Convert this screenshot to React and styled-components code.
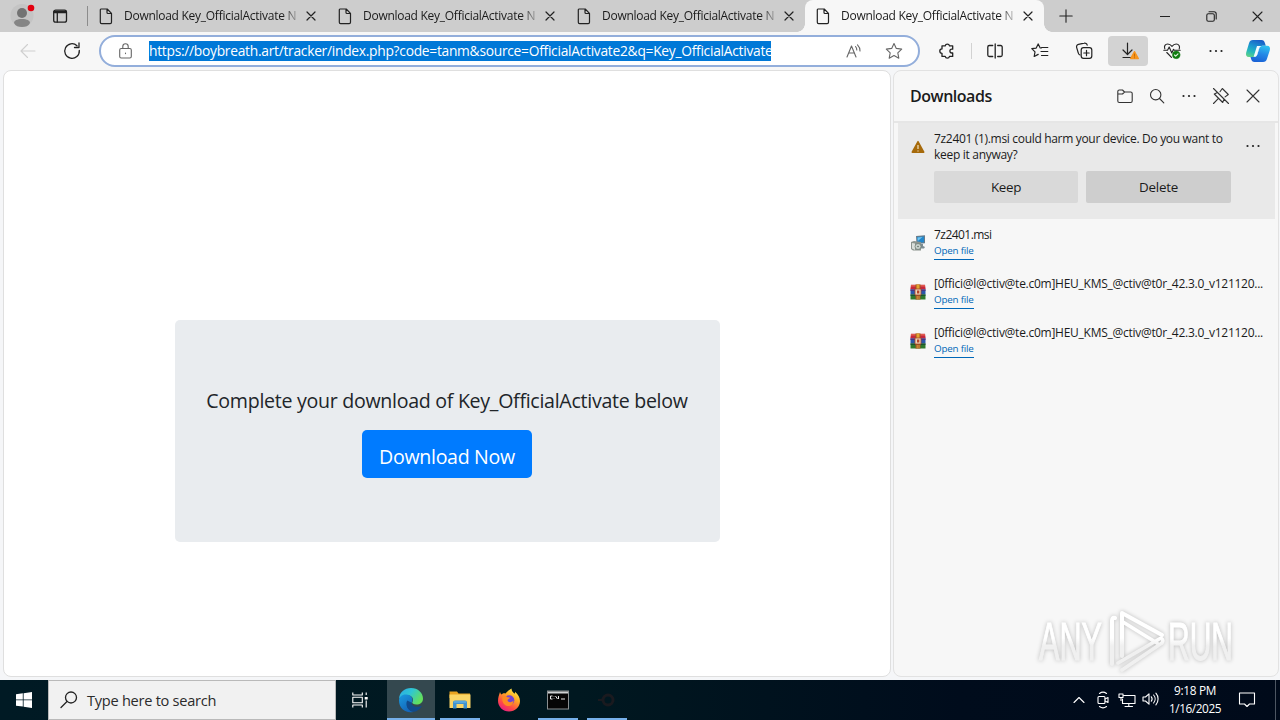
import React from 'react';
import styled, { createGlobalStyle } from 'styled-components';

const GlobalStyle = createGlobalStyle`
  body {
    margin: 0;
    overflow: hidden;
    font-family: 'Open Sans', 'Noto Sans', sans-serif;
    color: #1b1b1b;
  }

  * {
    box-sizing: border-box;
  }

  svg {
    display: block;
    flex-shrink: 0;
  }
`;

const Desktop = styled.div`
  width: 1280px;
  height: 720px;
  display: flex;
  flex-direction: column;
  position: relative;
  overflow: hidden;
  background: #f5f6f8;
`;

/* Text whose tracking is tuned per use */
const Label = styled.span`
  font-size: ${(p) => p.$size || 12}px;
  letter-spacing: ${(p) => p.$track || 0}px;
  white-space: nowrap;
`;

const Cell = styled.div`
  width: ${(p) => p.$w || 32}px;
  height: 100%;
  margin-left: ${(p) => p.$gap || 0}px;
  flex-shrink: 0;
  display: flex;
  align-items: center;
  justify-content: center;
`;

/* ---------- Tab strip ---------- */

const TabStrip = styled.div`
  height: 32px;
  flex-shrink: 0;
  display: flex;
  background: #cdcdcd;
`;

const StripDivider = styled.div`
  width: 1px;
  height: 20px;
  margin: 6px 0 0 11px;
  background: #8c8c8c;
`;

const Tab = styled.div`
  width: 239px;
  height: 32px;
  display: flex;
  align-items: center;
  padding-left: 11px;
  position: relative;
  border-radius: 8px 8px 0 0;
  background: ${(p) => (p.$active ? '#f7f7f7' : 'transparent')};

  &::before,
  &::after {
    content: '';
    display: ${(p) => (p.$active ? 'block' : 'none')};
    position: absolute;
    bottom: 0;
    width: 8px;
    height: 8px;
  }

  &::before {
    left: -8px;
    background: radial-gradient(circle at 0 0, transparent 7.5px, #f7f7f7 8px);
  }

  &::after {
    right: -8px;
    background: radial-gradient(circle at 100% 0, transparent 7.5px, #f7f7f7 8px);
  }
`;

const TabTitle = styled.div`
  width: 173px;
  margin-left: 11px;
  padding-bottom: 2px;
  overflow: hidden;
  line-height: 18px;
  mask-image: linear-gradient(to right, #000 158px, transparent 178px);
`;

const TabClose = styled.div`
  width: 28px;
  display: flex;
  justify-content: center;
`;

const WindowButtons = styled.div`
  display: flex;
  margin-left: auto;
`;

/* ---------- Toolbar ---------- */

const Toolbar = styled.div`
  height: 38px;
  flex-shrink: 0;
  display: flex;
  align-items: center;
  padding-left: 6px;
  background: #f7f7f7;
`;

const AddressBar = styled.div`
  width: 821px;
  height: 32px;
  flex-shrink: 0;
  margin-left: 5px;
  display: flex;
  align-items: center;
  border: 2px solid #93aedb;
  border-radius: 16px;
  background: #fff;
`;

const SelectedUrl = styled.div`
  height: 20px;
  flex-shrink: 0;
  line-height: 19px;
  width: 622px;
  background: #0078d7;
  color: #fff;
`;

const ToolSeparator = styled.div`
  width: 1px;
  height: 16px;
  margin: 0 2px 0 -2px;
  background: #d2d2d2;
`;

const ActiveTool = styled.div`
  width: 40px;
  height: 30px;
  margin-left: 3px;
  flex-shrink: 0;
  display: flex;
  align-items: center;
  justify-content: center;
  border-radius: 4px;
  background: #d3d3d3;
`;

/* ---------- Page ---------- */

const Main = styled.div`
  height: 610px;
  flex-shrink: 0;
  display: flex;
  gap: 2px;
  padding: 0 0 3px 3px;
`;

const Page = styled.div`
  width: 888px;
  height: 607px;
  display: flex;
  justify-content: center;
  padding-top: 249px;
  border: 1px solid #dfdfdf;
  border-radius: 8px;
  background: #fff;
`;

const Jumbotron = styled.div`
  width: 545px;
  height: 222px;
  display: flex;
  flex-direction: column;
  align-items: center;
  padding-top: 66px;
  border-radius: 5px;
  background: #e9ecef;
  color: #212529;
`;

const Lead = styled.p`
  margin: 0 0 14px;
  height: 30px;
  line-height: 30px;
`;

const DownloadButton = styled.button`
  width: 170px;
  height: 48px;
  padding: 4px 0 0;
  border: 0;
  border-radius: 5px;
  background: #007bff;
  color: #fff;
  font-family: inherit;
`;

/* ---------- Downloads panel ---------- */

const Panel = styled.aside`
  width: 386px;
  height: 607px;
  display: flex;
  flex-direction: column;
  border: 1px solid #e2e2e2;
  border-radius: 8px;
  background: #f7f7f7;
`;

const PanelHeader = styled.div`
  height: 52px;
  display: flex;
  align-items: center;
  padding: 0 9px 0 16px;
  border-bottom: 2px solid #e6e6e6;
`;

const PanelTitle = styled.h1`
  margin: 0 auto 0 0;
  font-size: 16px;
  font-weight: 600;
  letter-spacing: -0.47px;
`;

const Warning = styled.div`
  width: 377px;
  height: 96px;
  margin-left: 4px;
  padding: 8px 6px 0 12px;
  display: flex;
  background: #e9e9e9;
`;

const WarningBody = styled.div`
  width: 297px;
  margin: 0 14px 0 8px;
`;

const WarningText = styled.div`
  display: flex;
  flex-direction: column;
  line-height: 16px;
  height: 40px;
`;

const ButtonRow = styled.div`
  display: flex;
  gap: 8px;
`;

const PanelButton = styled.button`
  width: ${(p) => p.$w}px;
  height: 32px;
  padding: 0;
  border: 0;
  border-radius: 2px;
  background: ${(p) => p.$bg};
  color: #1b1b1b;
  font-family: inherit;
`;

const FileRow = styled.div`
  height: 49px;
  display: flex;
  padding: 8px 0 0 16px;
`;

const FileIcon = styled.div`
  width: 16px;
  padding-top: ${(p) => p.$drop || 8}px;
`;

const FileInfo = styled.div`
  display: flex;
  flex-direction: column;
  align-items: flex-start;
  margin-left: 8px;
  line-height: 16px;
`;

const OpenLink = styled.a`
  width: 40px;
  height: 15px;
  margin-top: 2px;
  line-height: 12px;
  border-bottom: 1px solid #0067b8;
  color: #0067b8;
  display: flex;
`;

/* ---------- Watermark ---------- */

const Watermark = styled.svg`
  position: absolute;
  left: 1030px;
  top: 602px;
  filter: drop-shadow(0 0 2px rgba(0, 0, 0, 0.24));
`;

/* ---------- Taskbar ---------- */

const Taskbar = styled.div`
  height: 40px;
  flex-shrink: 0;
  display: flex;
  background: linear-gradient(to right, #001a24 0, #001820 45%, #000c1c 75%, #000a1a 100%);
  color: #fff;
`;

const SearchBox = styled.div`
  width: 288px;
  height: 40px;
  display: flex;
  align-items: center;
  padding-left: 11px;
  gap: 9px;
  border: 1px solid #b9b9b9;
  background: #f1f1f1;
  color: #2b2b2b;
`;

const AppButton = styled.div`
  width: ${(p) => p.$w || 40}px;
  height: 40px;
  margin-left: ${(p) => p.$gap || 0}px;
  display: flex;
  align-items: center;
  justify-content: center;
  padding-top: 2px;
  border-bottom: 2px solid ${(p) => (p.$running ? '#76b0ea' : 'transparent')};
  background: ${(p) => (p.$active ? '#34484f' : 'transparent')};
  background-clip: padding-box;
`;

const Tray = styled.div`
  display: flex;
  margin-left: auto;
`;

const Clock = styled.div`
  width: 64px;
  display: flex;
  flex-direction: column;
  align-items: center;
  padding-top: 1px;
  line-height: 18px;
`;

const ShowDesktop = styled.div`
  width: 5px;
  height: 40px;
  margin-left: 8px;
  border-left: 1px solid #4d5662;
`;

/* ---------- Icons ---------- */

const Svg = ({ w = 16, h = w, sw = 1.1, color = '#222', children }) => (
  <svg
    width={w}
    height={h}
    viewBox={`0 0 ${w} ${h}`}
    fill="none"
    stroke={color}
    strokeWidth={sw}
    strokeLinecap="round"
    strokeLinejoin="round"
  >
    {children}
  </svg>
);

const ProfileIcon = () => (
  <svg width="26" height="28" viewBox="0 0 26 28">
    <circle cx="13" cy="13.5" r="11.5" fill="#c4c4c4" />
    <circle cx="13" cy="11" r="5" fill="#737373" />
    <path d="M5 21c0-2.400 3-4 8-4s8 1.600 8 4c-1.500 3-4.500 4-8 4s-6.500-1-8-4z" fill="#858585" />
    <circle cx="22" cy="6" r="3.300" fill="#e3000f" />
  </svg>
);

const TabActionsIcon = () => (
  <Svg sw={1.3}>
    <rect x="1.700" y="2.200" width="12.800" height="12" rx="2" />
    <path d="M2.500 4h11.200" strokeWidth="2.600" />
    <path d="M5.300 5v9" />
  </Svg>
);

const PageIcon = () => (
  <Svg w={14} h={17} sw={1.2}>
    <path d="M2 1h6.200L12.500 5.400V14.300a1.300 1.300 0 0 1-1.300 1.300H2.600A1.300 1.300 0 0 1 1.300 14.300V1.800A.8.8 0 0 1 2 1zM8 1.300v3.200a1 1 0 0 0 1 1h3.300" />
  </Svg>
);

const CrossIcon = ({ size = 10, sw = 1.2, color }) => (
  <Svg w={size} sw={sw} color={color}>
    <path d={`M1 1L${size - 1} ${size - 1}M${size - 1} 1L1 ${size - 1}`} />
  </Svg>
);

const DotsIcon = () => (
  <svg width="16" height="16" viewBox="0 0 16 16" fill="#222">
    <circle cx="2.500" cy="8" r="1.100" />
    <circle cx="8" cy="8" r="1.100" />
    <circle cx="13.500" cy="8" r="1.100" />
  </svg>
);

const DownloadToolIcon = () => (
  <Svg w={24} h={20} sw={1.2}>
    <path d="M11.500 2v11M7 9l4.500 4.500L16 9M7 16.500h8" />
    <path d="M18.500 10.600l3.900 7h-7.800z" fill="#f7941d" stroke="#f7941d" />
    <path d="M18.500 13v2.300M18.500 16.700v.2" stroke="#c06a00" strokeWidth=".9" />
  </Svg>
);

const HeartIcon = () => (
  <Svg w={18} sw={1.1}>
    <path d="M1.800 6.800C.8 4 2.200 2 4.700 2 6.500 2 8 3 9 4.300 10 3 11.500 2 13.200 2c2.600 0 4 2.300 3 5M3.800 10.500l4.700 4.800" />
    <path d="M.8 8.300h3.700L6.200 5l2.600 6 1.700-3.700 1 1h5.700" />
    <circle cx="13.200" cy="12.900" r="3.800" fill="#107c10" stroke="#107c10" strokeWidth=".4" />
    <path d="M11.500 13l1.200 1.200 2.300-2.400" stroke="#e4f3e4" />
  </Svg>
);

const CopilotIcon = () => (
  <svg width="26" height="24" viewBox="0 0 26 24">
    <defs>
      <linearGradient id="copilotLeft" x1=".6" y1="0" x2=".2" y2="1">
        <stop offset="0" stopColor="#1a5fc8" />
        <stop offset=".4" stopColor="#1b97d0" />
        <stop offset=".7" stopColor="#25b9bb" />
        <stop offset="1" stopColor="#5fd088" />
      </linearGradient>
      <linearGradient id="copilotRight" x1=".7" y1="0" x2=".4" y2="1">
        <stop offset="0" stopColor="#2fc0f0" />
        <stop offset=".5" stopColor="#2488e6" />
        <stop offset="1" stopColor="#1a62d6" />
      </linearGradient>
    </defs>
    <path d="M8 1h8.500c2 0 2.800 1.200 3.400 3l.9 2.800h-3.300c-2 0-3 1-3.600 3l-1.700 5.400c-.6 1.900-1.500 2.800-3.400 2.800H4c-2.600 0-3.500-2-2.800-4.500L4 4.200C4.700 2.100 5.800 1 8 1z" fill="url(#copilotLeft)" />
    <path d="M18 23H9.500c-2 0-2.800-1.200-3.400-3l-.6-2H9c2 0 2.800-1 3.400-2.800l1.700-5.400c.6-2 1.600-3 3.600-3H22c2.600 0 3.500 2 2.800 4.500L22 19.800c-.7 2.100-1.800 3.200-4 3.200z" fill="url(#copilotRight)" />
    <path d="M12 7h4.500c-1.400.5-2 1.300-2.500 2.800l-1.700 5.400c-.4 1.300-.9 2-1.900 2.500H8.600z" fill="#f2fbff" />
  </svg>
);

const PinOffIcon = () => (
  <Svg w={18} sw={1.1} color="#333">
    <path d="M1.500 1.500l15 15M8 4.700l2.300-3.200 6 6-3.200 2.400M5.500 5.600L2.300 7l8.400 8.500 1.300-3.200M6 11.800L1.500 16.500" />
  </Svg>
);

const WarningIcon = () => (
  <svg width="16" height="16" viewBox="0 0 16 16">
    <path d="M7.400 2.200a.7.700 0 0 1 1.200 0l5.800 10.600a.8.800 0 0 1-.7 1.200H2.300a.8.800 0 0 1-.7-1.200z" fill="#a66a0b" />
    <path d="M8 6v4M8 11.500v1" stroke="#f4e4c6" strokeWidth="1.200" />
  </svg>
);

const InstallerIcon = () => (
  <svg width="16" height="16" viewBox="0 0 16 16">
    <path d="M6 1l9-.8v8L6.500 9z" fill="#687b89" />
    <path d="M7 2l7-.6v5.800l-6.500.6z" fill="#2387cc" />
    <path d="M7.500 2.400l5-.4-4.700 4z" fill="#72c5ef" />
    <path d="M9 9h4v2l2 1-1 1.500H9z" fill="#7d8c92" />
    <path d="M1 7l3-1 7 1v8.500H3L1 14z" fill="#8b948e" />
    <path d="M2 8l3 .5V15L2 13.500z" fill="#dadfda" />
    <circle cx="8" cy="11.500" r="3" fill="#c8d2cd" stroke="#68756e" strokeWidth=".7" />
    <circle cx="8" cy="11.500" r=".8" fill="#5b6b62" />
  </svg>
);

const ArchiveIcon = () => (
  <svg width="16" height="16" viewBox="0 0 16 16">
    <path d="M1 .8h14l.7 4.700H.3z" fill="#c5283d" />
    <path d="M1 1h14v1.600H1z" fill="#e25a4d" />
    <path d="M.5 5.500h15v5H.5z" fill="#2a56a8" />
    <path d="M.5 5.500h15v1.500H.5z" fill="#4b3583" />
    <path d="M.5 10.500h15v5H.5z" fill="#2e7a2c" />
    <path d="M.5 10.500h15v1.300H.5z" fill="#174d34" />
    <path d="M5.500.5h5v15h-5z" fill="#9b5520" />
    <path d="M6.500.5h3v5h-3z" fill="#e3a42e" />
    <path d="M5 5h6v6H5z" fill="#e9d6b8" stroke="#a9412c" strokeWidth=".8" />
    <path d="M7 6.500h2.300v3H7z" fill="#b84326" />
    <path d="M7.200 12v3.500M9 12v3.500" stroke="#dc9a3f" />
  </svg>
);

const EdgeIcon = () => (
  <svg width="26" height="26" viewBox="0 0 26 26">
    <defs>
      <linearGradient id="edgeTop" x1="0" y1="0" x2="1" y2=".5">
        <stop offset="0" stopColor="#2ba9e6" />
        <stop offset=".5" stopColor="#2fc6d4" />
        <stop offset="1" stopColor="#63df5c" />
      </linearGradient>
      <linearGradient id="edgeBody" x1="0" y1="0" x2=".6" y2="1">
        <stop offset="0" stopColor="#1a9be0" />
        <stop offset="1" stopColor="#1464b8" />
      </linearGradient>
    </defs>
    <path d="M1 12C1.500 5 6.500 1 13 1c7 0 12 5 12 10.500 0 4-3 6-6.500 6-3 0-4.500-1.200-4.200-2.200 1.500-2 .9-6.300-3.800-6.800C6 8 2 9.500 1 12z" fill="url(#edgeTop)" />
    <path d="M1 13.500C1 9.500 4.500 7 8.500 7.500c4 .3 6.500 3 5.800 6.300-.3 1.500-1 1.700-.3 2.500C9 15 8 18 10 21c1.500 2.500 4 3.600 6 3.700C8 27 1 21.500 1 13.500z" fill="url(#edgeBody)" />
    <path d="M9.300 13.500c-2.600 4 .7 11.500 6.700 11.300 3-.5 5.500-2.300 7.500-5.300.3-.6-.2-.9-.7-.6-5 2.400-9.500-.2-9.300-3.400-1.600-.5-3.200-1.500-4.200-2z" fill="#114a8b" />
  </svg>
);

const ExplorerIcon = () => (
  <svg width="22" height="20" viewBox="0 0 22 20">
    <path d="M.5 1.500h7.500l1.500 2H21V8H.5z" fill="#e8a321" />
    <path d="M.5 4.500h21V18H.5z" fill="#fad566" />
    <path d="M4 18.500v-6a2 2 0 0 1 2-2h10a2 2 0 0 1 2 2v6h-3.500V14h-7v4.500z" fill="#3f93cf" />
    <path d="M5 12h12" stroke="#73bce9" strokeWidth="1" />
  </svg>
);

const FirefoxIcon = () => (
  <svg width="24" height="24" viewBox="0 0 24 24">
    <defs>
      <linearGradient id="foxBody" x1=".8" y1="0" x2=".2" y2="1">
        <stop offset="0" stopColor="#fff14f" />
        <stop offset=".35" stopColor="#ffab24" />
        <stop offset=".7" stopColor="#ff4a45" />
        <stop offset="1" stopColor="#e5178b" />
      </linearGradient>
    </defs>
    <path d="M3 4c.3 1.200.8 2 1.500 2.500C6 5 7 5 8.500 5.500 10.500 3.300 12 2 14.500.5c.2 2.500 1.200 3.500 3 5.200.5-.7.600-1.200.5-2C21 6 23 9.500 23 13c0 6-5 10.500-11 10.500S1 19 1 12.800C1 9.500 2 7 3 4z" fill="url(#foxBody)" />
    <circle cx="12.300" cy="12.300" r="5" fill="#7344d4" />
    <path d="M5.500 8.500c2-.8 3.500-.6 5 .7l2.500.3c-.5 1.500-2.300 1.500-2.500 3 1 2 4 2.500 6 0 0 4-3 6-6 5.500-3.500-.5-6-4-5-9.500z" fill="#ff8a22" />
  </svg>
);

const ConsoleIcon = () => (
  <svg width="22" height="20" viewBox="0 0 22 20">
    <rect x=".5" y="1" width="21" height="18" fill="#050505" stroke="#8a8f91" />
    <path d="M1 1.500h20v2H1z" fill="#cfd3d4" />
    <path d="M5.500 6H3.500v3h2M7 6.300v.5M7 8.500v.5M8.500 6l2 3M11.500 6v3M14 9h4" stroke="#e8e8e8" fill="none" />
  </svg>
);

const tools = {
  puzzle: (
    <Svg w={18} sw={1.3}>
      <path d="M4 3.800H7.200A2.200 2.200 0 0 1 11.500 3.800H14.700V7.200H13.800a1.900 1.900 0 0 0 0 3.800H14.700V14.400H11.500A2.200 2.200 0 0 1 7.200 14.400H4V11.300A2.200 2.200 0 0 1 4 6.900z" />
    </Svg>
  ),
  split: (
    <Svg w={18} sw={1.3}>
      <path d="M6.700 3.500H3.300A1.500 1.500 0 0 0 1.800 5v8a1.500 1.500 0 0 0 1.500 1.500h3.400M11.700 3.500h3A1.500 1.500 0 0 1 16.200 5v8a1.500 1.500 0 0 1-1.500 1.500h-3M9.200 2v14" />
    </Svg>
  ),
  favorites: (
    <Svg w={18} sw={1.2}>
      <path d="M10.300 6H9.200L7.200 1.900 5.200 6.100l-4.400.6 3.200 3.200-.8 4.600 4-2.100M10.500 5.500h6.300M10 9.500h6.800M10.500 13.500h6.300" />
    </Svg>
  ),
  collections: (
    <Svg w={18} sw={1.2}>
      <path d="M5 13A2.500 2.500 0 0 1 3.300 11L1.600 5.300A2.500 2.500 0 0 1 3.500 2.300L9.200 1.200a2.500 2.500 0 0 1 3 1.900" />
      <rect x="6.200" y="5.700" width="10.600" height="10.600" rx="2.300" />
      <path d="M11.500 8.300v5.400M8.800 11h5.400" />
    </Svg>
  ),
};

const TITLE = 'Download Key_OfficialActivate N';
const tabs = [false, false, false, true];

const files = [
  { name: '7z2401.msi', icon: <InstallerIcon />, track: -0.55 },
  { name: '[0ffici@l@ctiv@te.c0m]HEU_KMS_@ctiv@t0r_42.3.0_v121120...', icon: <ArchiveIcon />, track: -0.26 },
  { name: '[0ffici@l@ctiv@te.c0m]HEU_KMS_@ctiv@t0r_42.3.0_v121120...', icon: <ArchiveIcon />, track: -0.26 },
];

const BrowserTabs = () => (
  <TabStrip>
    <Cell $w={44}><ProfileIcon /></Cell>
    <Cell $w={32}><TabActionsIcon /></Cell>
    <StripDivider />
    {tabs.map((active, i) => (
      <Tab key={i} $active={active}>
        <PageIcon />
        <TabTitle><Label $track={-0.27}>{TITLE}</Label></TabTitle>
        <TabClose><CrossIcon /></TabClose>
      </Tab>
    ))}
    <Cell $w={44}>
      <Svg w={14}><path d="M7 .8v12.400M.8 7h12.400" /></Svg>
    </Cell>
    <WindowButtons>
      <Cell $w={46}><Svg w={10}><path d="M0 5.500h10" /></Svg></Cell>
      <Cell $w={46}>
        <Svg w={11}>
          <rect x=".8" y="2.700" width="7.500" height="7.500" rx="1.500" />
          <path d="M3 .8h5a2.200 2.200 0 0 1 2.200 2.200v5" />
        </Svg>
      </Cell>
      <Cell $w={46}><CrossIcon size={11} sw={1.1} /></Cell>
    </WindowButtons>
  </TabStrip>
);

const BrowserToolbar = () => (
  <Toolbar>
    <Cell $w={44}>
      <Svg color="#cfcfcf"><path d="M15 8H1M7.500 1.500L1 8l6.500 6.500" /></Svg>
    </Cell>
    <Cell $w={44}>
      <Svg w={18} sw={1.3}>
        <path d="M16.300 8.500A7.300 7.300 0 1 1 14 3.700M16 1v4.500h-4.500" />
      </Svg>
    </Cell>
    <AddressBar>
      <Cell $w={48}>
        <Svg w={14} h={16} color="#666">
          <rect x="1.700" y="5.500" width="11.600" height="9.500" rx="1.500" />
          <path d="M4.800 5.500V3.500a2.700 2.700 0 0 1 5.400 0v2M7.500 10v.6" />
        </Svg>
      </Cell>
      <SelectedUrl>
        <Label $size={13.8} $track={-0.275}>
          https://boybreath.art/tracker/index.php?code=tanm&amp;source=OfficialActivate2&amp;q=Key_OfficialActivate
        </Label>
      </SelectedUrl>
      <Cell $w={42} $gap={62}>
        <Svg w={16} color="#666">
          <path d="M1 14L5.500 3 10 14M2.700 10h5.800M9.500 3.500a5 5 0 0 1 1.300 3.500M11.500 1.800a8.500 8.500 0 0 1 2.500 6.200" />
        </Svg>
      </Cell>
      <Cell $w={38}>
        <Svg w={18} color="#666">
          <path d="M9 1.500l2.300 4.900 5.400.7-3.900 3.700 1 5.400L9 13.600l-4.800 2.600 1-5.400L1.300 7.100l5.400-.7z" />
        </Svg>
      </Cell>
    </AddressBar>
    <Cell $w={53}>{tools.puzzle}</Cell>
    <ToolSeparator />
    <Cell $w={42}>{tools.split}</Cell>
    <Cell $w={47}>{tools.favorites}</Cell>
    <Cell $w={42}>{tools.collections}</Cell>
    <ActiveTool><DownloadToolIcon /></ActiveTool>
    <Cell $w={48}><HeartIcon /></Cell>
    <Cell $w={40}><DotsIcon /></Cell>
    <Cell $w={44}><CopilotIcon /></Cell>
  </Toolbar>
);

const DownloadsPanel = () => (
  <Panel>
    <PanelHeader>
      <PanelTitle>Downloads</PanelTitle>
      <Cell>
        <Svg color="#333">
          <path d="M.8 3.500A1.500 1.500 0 0 1 2.300 2H5.500l2 2h6.200a1.500 1.500 0 0 1 1.500 1.500V13a1.500 1.500 0 0 1-1.500 1.500H2.300A1.500 1.500 0 0 1 .8 13zM.8 6h4.700l2-2" />
        </Svg>
      </Cell>
      <Cell>
        <Svg color="#333"><circle cx="6.700" cy="6.700" r="5.200" /><path d="M10.500 10.500l4.300 4.300" /></Svg>
      </Cell>
      <Cell><DotsIcon /></Cell>
      <Cell><PinOffIcon /></Cell>
      <Cell><CrossIcon size={14} sw={1.1} color="#333" /></Cell>
    </PanelHeader>
    <Warning>
      <FileIcon><WarningIcon /></FileIcon>
      <WarningBody>
        <WarningText>
          <Label $track={-0.32}>7z2401 (1).msi could harm your device. Do you want to</Label>
          <Label $track={-0.3}>keep it anyway?</Label>
        </WarningText>
        <ButtonRow>
          <PanelButton $w={144} $bg="#d9d9d9"><Label $size={13.4} $track={-0.3}>Keep</Label></PanelButton>
          <PanelButton $w={145} $bg="#cecece"><Label $size={13.4} $track={-0.25}>Delete</Label></PanelButton>
        </ButtonRow>
      </WarningBody>
      <FileIcon $drop={7}><DotsIcon /></FileIcon>
    </Warning>
    {files.map((f, i) => (
      <FileRow key={i}>
        <FileIcon>{f.icon}</FileIcon>
        <FileInfo>
          <Label $track={f.track}>{f.name}</Label>
          <OpenLink><Label $size={9.8} $track={-0.2}>Open file</Label></OpenLink>
        </FileInfo>
      </FileRow>
    ))}
  </Panel>
);

const WindowsTaskbar = () => (
  <Taskbar>
    <Cell $w={48}>
      <svg width="16" height="16" viewBox="0 0 16 16" fill="#fff">
        <path d="M0 2.200l6.800-.9v6.200H0zM7.600 1.200L16 0v7.500H7.600zM0 8.300h6.800v6.300L0 13.700zM7.600 8.300H16V16l-8.400-1.200z" />
      </svg>
    </Cell>
    <SearchBox>
      <Svg w={18} sw={1.3}><circle cx="11" cy="6.500" r="5.500" /><path d="M7 10.500l-6 6" /></Svg>
      <Label $size={14.6} $track={-0.27}>Type here to search</Label>
    </SearchBox>
    <Cell $w={48}>
      <Svg color="#fff">
        <path d="M.8.500v2.500h9.500V.500M.8 15.500V13h9.500v2.500M.8 5.300h9.500v5.400H.8zM14.200.500v2.500M14.200 8.500v7" strokeLinecap="butt" />
        <path d="M12.700 5h3v2.500h-3z" fill="#fff" stroke="none" />
      </Svg>
    </Cell>
    <AppButton $w={48} $gap={3} $active $running><EdgeIcon /></AppButton>
    <AppButton $gap={5} $running><ExplorerIcon /></AppButton>
    <AppButton $gap={9}><FirefoxIcon /></AppButton>
    <AppButton $gap={9} $running><ConsoleIcon /></AppButton>
    <AppButton $gap={9} $running>
      <svg width="20" height="16" viewBox="0 0 20 16">
        <circle cx="11" cy="8" r="5" fill="none" stroke="#1a1a1f" strokeWidth="3" />
        <path d="M1 8h6" stroke="#1a1a1f" strokeWidth="2" />
      </svg>
    </AppButton>
    <Tray>
      <Cell $w={24}><Svg w={12} color="#fff"><path d="M1 8.500l5-5 5 5" /></Svg></Cell>
      <Cell $w={24}>
        <Svg w={14} h={18} color="#fff">
          <rect x="2" y="5.500" width="7" height="7" rx="1" />
          <path d="M9 8l3-1.500v5L9 10M3.500 2.500c2-1.500 5-1.500 7 0M3.500 15.500c2 1.500 5 1.500 7 0" />
        </Svg>
      </Cell>
      <Cell $w={24}>
        <Svg w={18} h={16} color="#fff">
          <path d="M6 3.500h11v8H4.500V7M10.800 11.500v3M7 14.500h7.500M1 2h4v3.500H1zM3 5.500v3" />
        </Svg>
      </Cell>
      <Cell $w={24}>
        <Svg w={18} color="#fff">
          <path d="M1 6h2.500L7 2.800v10.400L3.500 10H1zM9.300 5.800c1 1.300 1 3.100 0 4.400M11.600 4c2 2.300 2 5.700 0 8M13.900 2.200c2.900 3.300 2.900 8.300 0 11.600" />
        </Svg>
      </Cell>
      <Clock>
        <Label $size={11.8} $track={-0.3}>9:18 PM</Label>
        <Label $size={11.8} $track={-0.42}>1/16/2025</Label>
      </Clock>
      <Cell $w={40}>
        <Svg w={18} color="#fff"><path d="M1.500 2h15v11h-5L9 15.500 6.500 13h-5z" /></Svg>
      </Cell>
      <ShowDesktop />
    </Tray>
  </Taskbar>
);

const AnyRunMark = () => (
  <Watermark width="230" height="76" viewBox="0 0 230 76">
    <defs>
      <linearGradient id="markFade" gradientUnits="userSpaceOnUse" x1="0" y1="36" x2="0" y2="44">
        <stop offset="0" stopColor="#fff" />
        <stop offset="1" stopColor="#f0f0f0" />
      </linearGradient>
    </defs>
    <g
      fill="url(#markFade)"
      stroke="url(#markFade)"
      strokeWidth="1"
      fontFamily="'Liberation Sans Narrow', 'Liberation Sans', sans-serif"
      fontSize="53"
    >
      <text x="9" y="58" textLength="63" lengthAdjust="spacingAndGlyphs">ANY</text>
      <text x="138" y="58" textLength="65" lengthAdjust="spacingAndGlyphs">RUN</text>
    </g>
    <g fill="none" stroke="url(#markFade)" strokeWidth="4" strokeLinecap="round" strokeLinejoin="round">
      <path d="M85 16q-3-1-3 3v43" />
      <path d="M92 54V11L132 33" />
      <path d="M127 41L93 20M92 68l40-27q2-3-1-5L88 61" strokeWidth="3.500" />
    </g>
  </Watermark>
);

const App = () => (
  <>
    <GlobalStyle />
    <Desktop>
      <BrowserTabs />
      <BrowserToolbar />
      <Main>
        <Page>
          <Jumbotron>
            <Lead>
              <Label $size={19.6} $track={-0.29}>Complete your download of Key_OfficialActivate below</Label>
            </Lead>
            <DownloadButton><Label $size={19.6} $track={-0.32}>Download Now</Label></DownloadButton>
          </Jumbotron>
        </Page>
        <DownloadsPanel />
      </Main>
      <WindowsTaskbar />
      <AnyRunMark />
    </Desktop>
  </>
);

export default App;
